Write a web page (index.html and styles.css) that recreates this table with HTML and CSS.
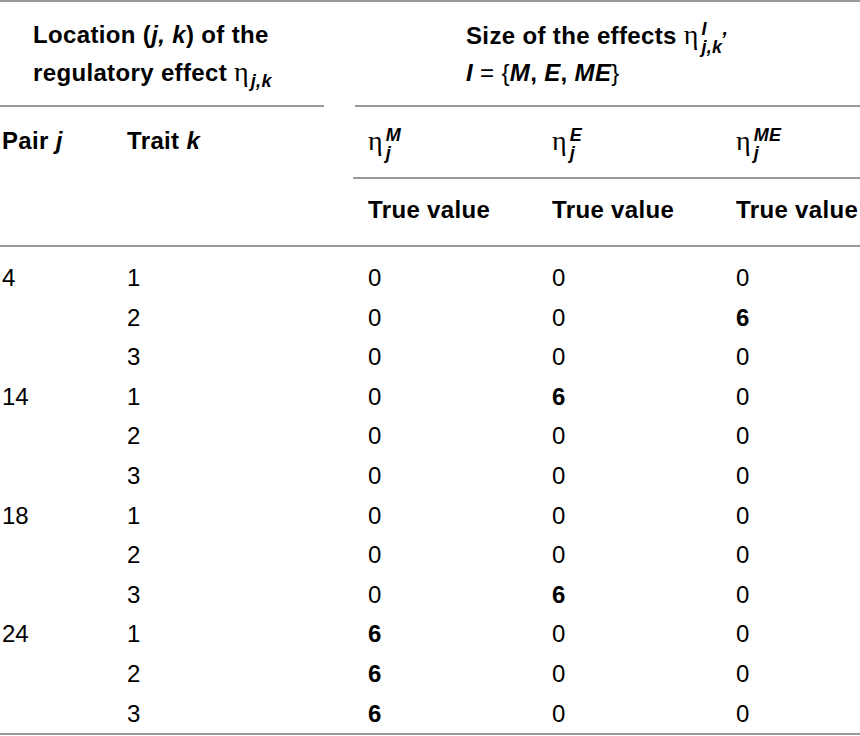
FILE: index.html
```html
<!DOCTYPE html>
<html>
<head>
<meta charset="utf-8">
<link rel="stylesheet" href="styles.css">
</head>
<body>
<div class="tbl">
  <div class="head">
    <div class="g-left">Location (<i>j, k</i>) of the<br>regulatory effect <span class="eta">η</span><span class="sb">j,k</span></div>
    <div class="g-right">Size of the effects <span class="eta">η</span><span class="ss"><span class="sp">I</span><span class="sbb">j,k</span></span><span class="rc">,</span><br><i>I</i> <span class="op">= {</span><i>M</i>, <i>E</i>, <i>ME</i><span class="op">}</span></div>

    <div class="c c1 r2">Pair <i>j</i></div>
    <div class="c c2 r2">Trait <i>k</i></div>
    <div class="c cn r2 eline"><span class="eta">η</span><span class="ss"><span class="sp">M</span><span class="sbb">j</span></span></div>
    <div class="c cn r2 eline"><span class="eta">η</span><span class="ss"><span class="sp">E</span><span class="sbb">j</span></span></div>
    <div class="c cn r2 eline"><span class="eta">η</span><span class="ss"><span class="sp">ME</span><span class="sbb">j</span></span></div>

    <div class="c c1 r3"></div>
    <div class="c c2 r3"></div>
    <div class="c cn r3">True value</div>
    <div class="c cn r3">True value</div>
    <div class="c cn r3">True value</div>
  </div>

  <div class="body">
    <div class="d c1">4</div><div class="d c2">1</div><div class="d cn">0</div><div class="d cn">0</div><div class="d cn">0</div>
    <div class="d c1"></div><div class="d c2">2</div><div class="d cn">0</div><div class="d cn">0</div><div class="d cn"><b>6</b></div>
    <div class="d c1"></div><div class="d c2">3</div><div class="d cn">0</div><div class="d cn">0</div><div class="d cn">0</div>
    <div class="d c1">14</div><div class="d c2">1</div><div class="d cn">0</div><div class="d cn"><b>6</b></div><div class="d cn">0</div>
    <div class="d c1"></div><div class="d c2">2</div><div class="d cn">0</div><div class="d cn">0</div><div class="d cn">0</div>
    <div class="d c1"></div><div class="d c2">3</div><div class="d cn">0</div><div class="d cn">0</div><div class="d cn">0</div>
    <div class="d c1">18</div><div class="d c2">1</div><div class="d cn">0</div><div class="d cn">0</div><div class="d cn">0</div>
    <div class="d c1"></div><div class="d c2">2</div><div class="d cn">0</div><div class="d cn">0</div><div class="d cn">0</div>
    <div class="d c1"></div><div class="d c2">3</div><div class="d cn">0</div><div class="d cn"><b>6</b></div><div class="d cn">0</div>
    <div class="d c1">24</div><div class="d c2">1</div><div class="d cn"><b>6</b></div><div class="d cn">0</div><div class="d cn">0</div>
    <div class="d c1"></div><div class="d c2">2</div><div class="d cn"><b>6</b></div><div class="d cn">0</div><div class="d cn">0</div>
    <div class="d c1"></div><div class="d c2">3</div><div class="d cn"><b>6</b></div><div class="d cn">0</div><div class="d cn">0</div>
  </div>
</div>
</body>
</html>
```

FILE: styles.css
```css
html, body {
  margin: 0;
  padding: 0;
  background: #fff;
}
body {
  width: 860px;
  overflow: hidden;
  font-family: "Liberation Sans", Arial, sans-serif;
  color: #000;
  font-size: 24px;
}
.tbl {
  border-top: 2px solid #999;
  border-bottom: 2px solid #999;
}
.head, .body {
  display: grid;
  grid-template-columns: 125px 228px 184px 184px 139px;
}
.head {
  font-weight: bold;
  letter-spacing: 0.35px;
  line-height: 36.5px;
}
.g-left {
  grid-column: 1 / 3;
  margin-right: 29px;
  padding: 15px 0 14px 33px;
  border-bottom: 2px solid #999;
}
.g-right {
  grid-column: 3 / 6;
  margin-left: 2px;
  padding: 15px 0 14px 111px;
  border-bottom: 2px solid #999;
}
.c { white-space: nowrap; }
.c1, .c2 { padding-left: 2px; }
.cn { padding-left: 15px; }
.r2 { padding-top: 16px; padding-bottom: 18.5px; }
.eline { border-bottom: 2px solid #999; padding-bottom: 16.5px; }
.r3 {
  padding-top: 13px;
  padding-bottom: 16.5px;
  border-bottom: 2px solid #999;
}
.eta {
  font-family: "Liberation Serif", "Times New Roman", serif;
  font-weight: normal;
  font-size: 28px;
  letter-spacing: 0;
}
.sb {
  font-style: italic;
  font-size: 18px;
  line-height: 0;
  vertical-align: -6px;
  margin-left: 2px;
}
.ss {
  display: inline-flex;
  flex-direction: column;
  vertical-align: 9px;
  font-style: italic;
  font-size: 18px;
  line-height: 18px;
  margin-left: 3px;
  margin-bottom: -10px;
  margin-top: -10px;
}
.sp { display: block; }
.sbb { display: block; }
.rc {
  font-style: italic;
  vertical-align: 9px;
  line-height: 0;
  font-size: 20px;
}
.op { font-weight: normal; }
.body {
  padding-top: 11px;
  line-height: 39.6px;
}
.d { white-space: nowrap; }
```
